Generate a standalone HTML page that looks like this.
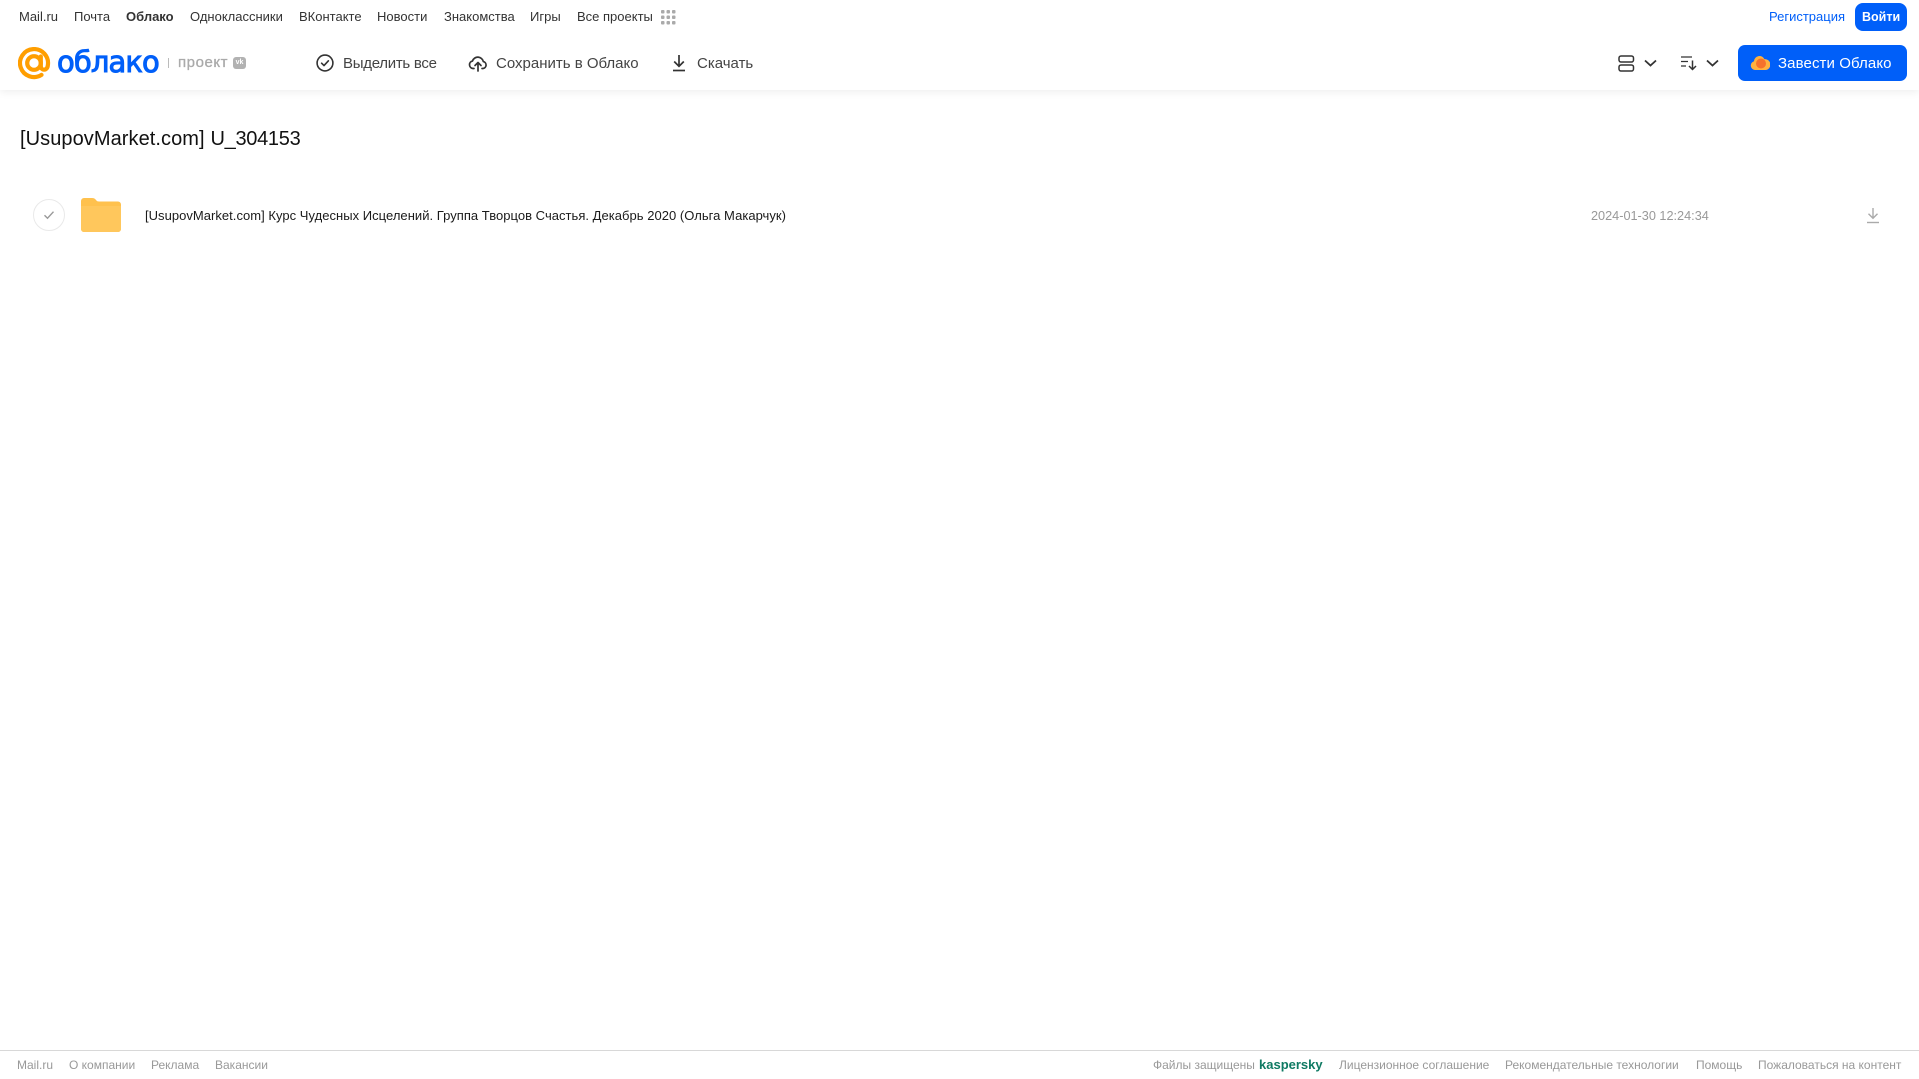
<!DOCTYPE html>
<html lang="ru"><head><meta charset="utf-8"><title>Облако</title>
<style>
html,body{margin:0;padding:0;background:#fff;width:1919px;height:1079px;overflow:hidden}
body{position:relative;font-family:"Liberation Sans",Arial,sans-serif;color:#333}
.t{position:absolute;white-space:nowrap;line-height:20px}
.n{top:7px;font-size:13px;color:#333}
.b{top:54px;font-size:15px;color:#444}
.f{top:1055px;font-size:12px;color:#999}
svg{position:absolute;display:block}
#hdr{position:absolute;left:0;top:0;width:1919px;height:90px;background:#fff;box-shadow:0 2px 8px rgba(0,0,0,.07)}
</style></head><body>
<div id="hdr"></div>
<span class="t n" style="left:19px">Mail.ru</span>
<span class="t n" style="left:74px">Почта</span>
<span class="t n" style="left:126px;font-weight:700">Облако</span>
<span class="t n" style="left:190px">Одноклассники</span>
<span class="t n" style="left:299px">ВКонтакте</span>
<span class="t n" style="left:377px">Новости</span>
<span class="t n" style="left:444px">Знакомства</span>
<span class="t n" style="left:530px">Игры</span>
<span class="t n" style="left:577px">Все проекты</span>
<svg style="left:661px;top:10px" width="15" height="15" fill="#aaa"><rect x="0" y="0" width="3.5" height="3.5" rx="1"/><rect x="5.5" y="0" width="3.5" height="3.5" rx="1"/><rect x="11" y="0" width="3.5" height="3.5" rx="1"/><rect x="0" y="5.5" width="3.5" height="3.5" rx="1"/><rect x="5.5" y="5.5" width="3.5" height="3.5" rx="1"/><rect x="11" y="5.5" width="3.5" height="3.5" rx="1"/><rect x="0" y="11" width="3.5" height="3.5" rx="1"/><rect x="5.5" y="11" width="3.5" height="3.5" rx="1"/><rect x="11" y="11" width="3.5" height="3.5" rx="1"/></svg>
<span class="t n" style="left:1769px;color:#005ff9">Регистрация</span>
<div style="position:absolute;left:1855px;top:3px;width:52px;height:28px;border-radius:8px;background:#005ff9"></div>
<span class="t n" style="left:1862px;color:#fff;font-weight:700;font-size:12.5px">Войти</span>

<svg style="left:18px;top:47px" width="34" height="33" viewBox="0 0 34 33" fill="none" stroke="#ff9e00" stroke-width="4.2"><circle cx="16" cy="16" r="6.8"/><path d="M22.8 9.5V19c0 5 6.500 5 7-.5A14 14 0 1 0 23.500 27.900" stroke-linecap="round"/></svg>
<span class="t" style="left:57px;top:44px;line-height:36px;font-family:'DejaVu Sans','Liberation Sans',sans-serif;font-size:29px;color:#005ff9;-webkit-text-stroke:1px #005ff9;letter-spacing:-.9px">облако</span>
<div style="position:absolute;left:168px;top:58px;width:1px;height:10px;background:#bbb"></div>
<span class="t" style="left:178px;top:53px;font-size:15px;color:#aaa;letter-spacing:.55px;-webkit-text-stroke:.3px #aaa">проект</span>
<div style="position:absolute;left:233px;top:57px;width:13px;height:12px;border-radius:3px;background:#b2b2b2;color:#fff;font-size:7px;line-height:12px;text-align:center;font-weight:700">vk</div>

<svg style="left:316px;top:54px" width="18" height="18" fill="none" stroke="#333" stroke-width="1.6"><circle cx="9" cy="9" r="7.9"/><path d="M5.6 9.2l2.4 2.4 4.4-4.8" stroke-linecap="round" stroke-linejoin="round"/></svg>
<span class="t b" style="left:343px;letter-spacing:-.28px">Выделить все</span>
<svg style="left:468px;top:54px" width="20" height="18" fill="none" stroke="#333" stroke-width="1.7" stroke-linecap="round" stroke-linejoin="round"><path d="M6 14.5H5a3.8 3.8 0 0 1-.5-7.5 5.6 5.6 0 0 1 10.8.6A3.5 3.5 0 0 1 15 14.5h-1"/><path d="M10 17V9M7 11.5L10 8.5l3 3"/></svg>
<span class="t b" style="left:496px">Сохранить в Облако</span>
<svg style="left:671px;top:54px" width="16" height="18" fill="none" stroke="#333" stroke-width="1.7"><path d="M8 1v11M3.2 7.5L8 12.3l4.8-4.8"/><path d="M2 16.5h12"/></svg>
<span class="t b" style="left:697px">Скачать</span>

<svg style="left:1618px;top:55px" width="17" height="17" fill="none" stroke="#333" stroke-width="1.5"><rect x="1" y="1" width="14.500" height="6" rx="2"/><rect x="1" y="10" width="14.500" height="6" rx="2"/></svg>
<svg style="left:1644px;top:59px" width="13" height="8" fill="none" stroke="#333" stroke-width="1.8"><path d="M1 1.500l5.500 5 5.500-5"/></svg>
<svg style="left:1680px;top:55px" width="17" height="16" fill="none" stroke="#333" stroke-width="1.3"><path d="M1 2h11M1 6.500h7M1 11h5"/><path d="M12.500 5.500v9M9 11l3.500 3.500L16 11" stroke-width="1.500"/></svg>
<svg style="left:1706px;top:59px" width="13" height="8" fill="none" stroke="#333" stroke-width="1.8"><path d="M1 1.500l5.500 5 5.500-5"/></svg>
<div style="position:absolute;left:1738px;top:45px;width:169px;height:36px;border-radius:7px;background:#005ff9"></div>
<svg style="left:1750px;top:54px" width="20" height="17"><path d="M5 16a4.500 4.500 0 0 1-1-8.800A5.500 5.500 0 0 1 14.500 5.200 5.400 5.400 0 0 1 15.500 16z" fill="#ffb23f"/><circle cx="11" cy="9.500" r="5" fill="#f5722c"/></svg>
<span class="t b" style="left:1778px;color:#fff;letter-spacing:.1px">Завести Облако</span>

<span class="t" style="left:20px;top:127px;line-height:24px;font-size:20px;color:#111;letter-spacing:.07px">[UsupovMarket.com]</span>
<span class="t" style="left:210.500px;top:127px;line-height:24px;font-size:20px;color:#111;letter-spacing:-.3px">U_304153</span>

<div style="position:absolute;left:33px;top:199px;width:30px;height:30px;border:1px solid #e9e9e9;border-radius:50%"></div>
<svg style="left:43px;top:210px" width="12" height="10" fill="none" stroke="#999" stroke-width="1.400"><path d="M1.500 5.200l3 3 6-6.500"/></svg>
<svg style="left:81px;top:198px" width="40" height="34"><path d="M0 3a3 3 0 0 1 3-3h8c2 0 3 .8 4 2s1.500 1.500 3 1.500h19a3 3 0 0 1 3 3V31a3 3 0 0 1-3 3H3a3 3 0 0 1-3-3z" fill="#ffc14d"/><path d="M0 8h40v23a3 3 0 0 1-3 3H3a3 3 0 0 1-3-3z" fill="#ffc75c"/></svg>
<span class="t" style="left:145px;top:206px;font-size:13px;color:#1a1a1a;letter-spacing:.03px">[UsupovMarket.com] Курс Чудесных Исцелений. Группа Творцов Счастья. Декабрь 2020 (Ольга Макарчук)</span>
<span class="t" style="left:1591px;top:206px;font-size:12.7px;color:#999">2024-01-30 12:24:34</span>
<svg style="left:1866px;top:207px" width="14" height="17" fill="none" stroke="#aaa" stroke-width="1.400"><path d="M7 1v10M2.500 6.800L7 11.300l4.500-4.500"/><path d="M1 15.500h12"/></svg>

<div style="position:absolute;left:0;top:1050px;width:1919px;height:1px;background:#d8d8d8"></div>
<span class="t f" style="left:17px">Mail.ru</span>
<span class="t f" style="left:69px">О компании</span>
<span class="t f" style="left:151px">Реклама</span>
<span class="t f" style="left:215px">Вакансии</span>
<span class="t f" style="left:1153px">Файлы защищены</span>
<span class="t f" style="left:1259px;color:#0f7a63;font-weight:700;font-size:13px">kaspersky</span>
<span class="t f" style="left:1339px">Лицензионное соглашение</span>
<span class="t f" style="left:1505px">Рекомендательные технологии</span>
<span class="t f" style="left:1696px">Помощь</span>
<span class="t f" style="left:1758px">Пожаловаться на контент</span>
</body></html>
